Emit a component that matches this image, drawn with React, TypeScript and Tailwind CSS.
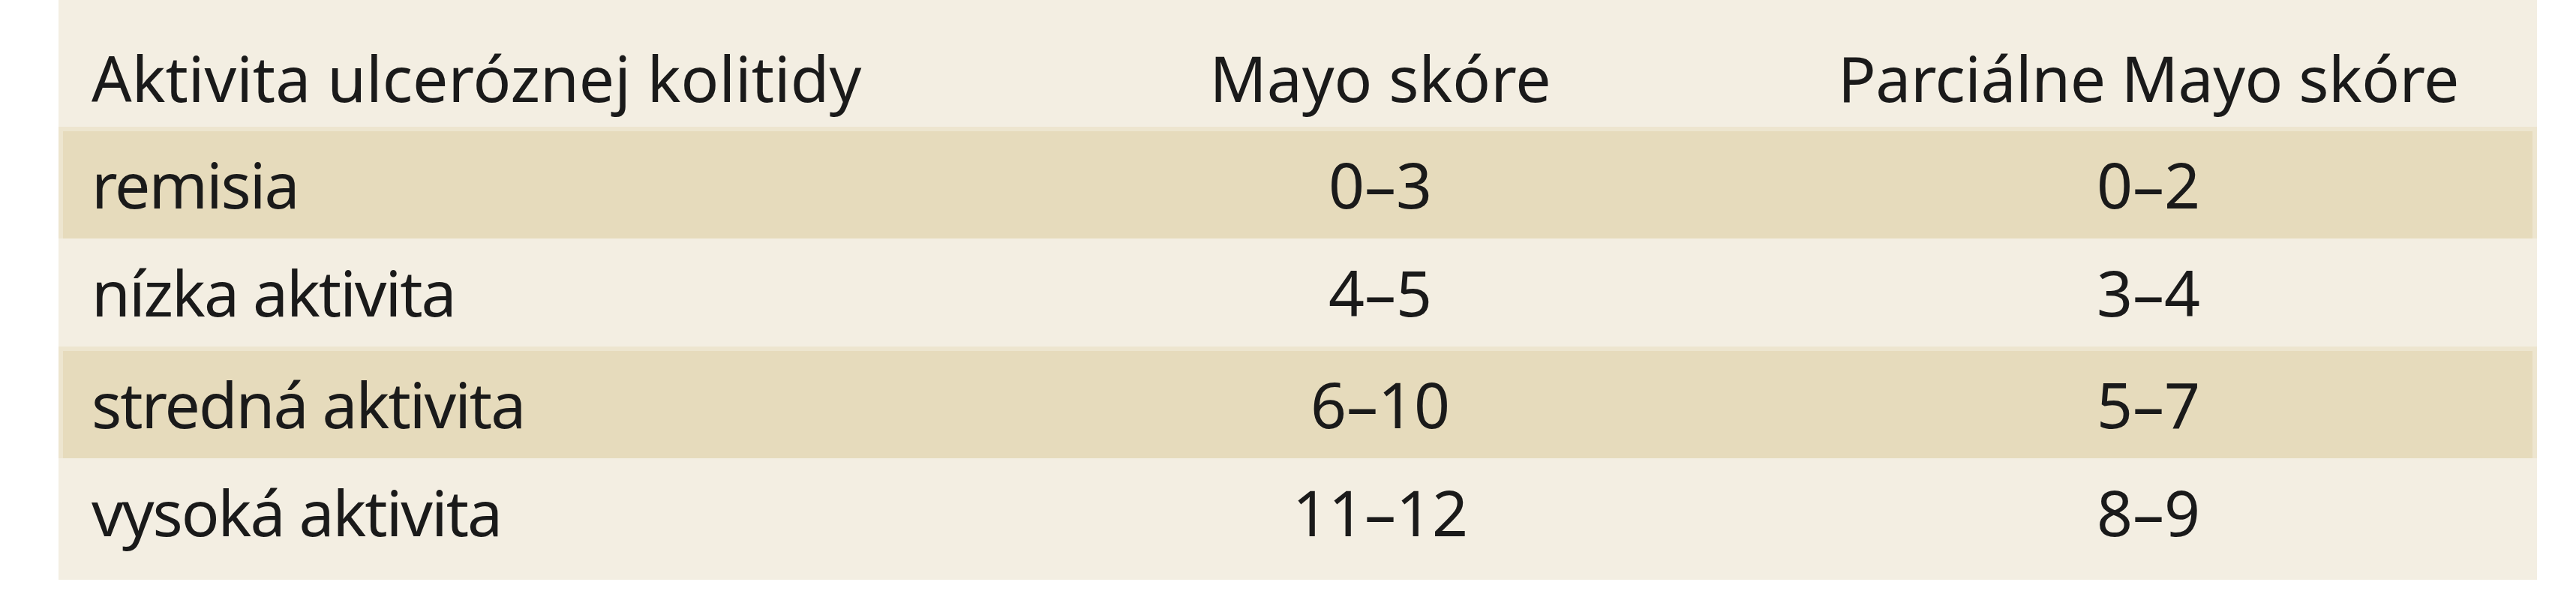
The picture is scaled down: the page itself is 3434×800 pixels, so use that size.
import React from "react";

const rows = [
  { label: "remisia", mayo: "0–3", partial: "0–2" },
  { label: "nízka aktivita", mayo: "4–5", partial: "3–4" },
  { label: "stredná aktivita", mayo: "6–10", partial: "5–7" },
  { label: "vysoká aktivita", mayo: "11–12", partial: "8–9" },
];

export default function App() {
  return (
    <div
      className="w-[3434px] h-[800px] bg-white text-[#1a1a1a] overflow-hidden"
      style={{ fontFamily: '"Noto Sans", "Open Sans", sans-serif' }}
    >
      <div className="ml-[78px] w-[3304px] bg-[#F3EEE2] pb-[18px] text-[84px] leading-[84px]">
        {/* header */}
        <div className="grid grid-cols-[1256px_1012px_1036px] h-[169px] pt-[62px]">
          <div className="pl-[44px] whitespace-nowrap">Aktivita ulceróznej kolitidy</div>
          <div className="text-center whitespace-nowrap">Mayo skóre</div>
          <div className="text-center whitespace-nowrap tracking-[-0.5px]">Parciálne Mayo skóre</div>
        </div>

        {rows.map((r, i) => {
          const dark = i % 2 === 0;
          return (
            <div
              key={r.label}
              className={
                dark
                  ? "grid grid-cols-[1256px_1012px_1036px] h-[149px] pt-[35px] bg-[#E6DBBC] shadow-[inset_0_6px_0_#EDE5CF,inset_6px_0_0_#EDE5CF,inset_-6px_0_0_#EDE5CF]"
                  : "grid grid-cols-[1256px_1012px_1036px] h-[144px] pt-[30px]"
              }
            >
              <div className="pl-[44px] whitespace-nowrap tracking-[-2px]">{r.label}</div>
              <div className="text-center">{r.mayo}</div>
              <div className="text-center">{r.partial}</div>
            </div>
          );
        })}
      </div>
    </div>
  );
}
